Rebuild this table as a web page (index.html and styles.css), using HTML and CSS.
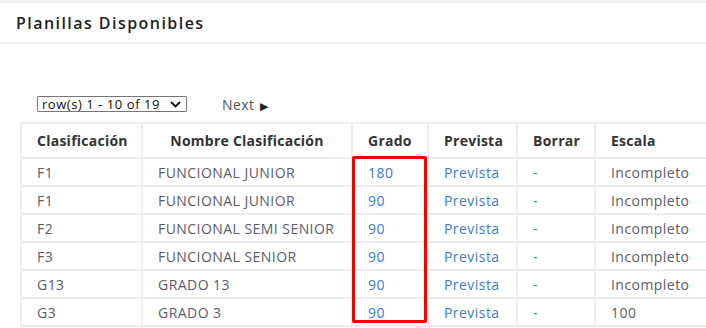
FILE: index.html
```html
<!DOCTYPE html>
<html lang="es">
<head>
<meta charset="utf-8">
<title>Planillas Disponibles</title>
<link rel="stylesheet" href="styles.css">
</head>
<body>
<div class="topbar"></div>
<header class="panel-head">
  <h1 class="panel-title">Planillas Disponibles</h1>
</header>
<main class="panel-body">
  <div class="pager">
    <div class="select">
      <span class="select-text">row(s) 1 - 10 of 19</span>
      <svg class="chev" width="11" height="7" viewBox="0 0 11 7"><path d="M1 1 L5.5 5.5 L10 1" fill="none" stroke="#111" stroke-width="1.8"/></svg>
    </div>
    <span class="next">Next <span class="tri">&#9654;</span></span>
  </div>
  <div class="table-wrap">
    <table class="grid">
      <colgroup>
        <col class="c1"><col class="c2"><col class="c3"><col class="c4"><col class="c5"><col class="c6">
      </colgroup>
      <thead>
        <tr>
          <th>Clasificación</th>
          <th class="center">Nombre Clasificación</th>
          <th>Grado</th>
          <th>Prevista</th>
          <th>Borrar</th>
          <th>Escala</th>
        </tr>
      </thead>
      <tbody>
        <tr><td>F1</td><td>FUNCIONAL JUNIOR</td><td class="link">180</td><td class="link">Prevista</td><td class="link">-</td><td>Incompleto</td></tr>
        <tr><td>F1</td><td>FUNCIONAL JUNIOR</td><td class="link">90</td><td class="link">Prevista</td><td class="link">-</td><td>Incompleto</td></tr>
        <tr><td>F2</td><td>FUNCIONAL SEMI SENIOR</td><td class="link">90</td><td class="link">Prevista</td><td class="link">-</td><td>Incompleto</td></tr>
        <tr><td>F3</td><td>FUNCIONAL SENIOR</td><td class="link">90</td><td class="link">Prevista</td><td class="link">-</td><td>Incompleto</td></tr>
        <tr><td>G13</td><td>GRADO 13</td><td class="link">90</td><td class="link">Prevista</td><td class="link">-</td><td>Incompleto</td></tr>
        <tr><td>G3</td><td>GRADO 3</td><td class="link">90</td><td class="link">Prevista</td><td class="link">-</td><td>100</td></tr>
        <tr><td>G4</td><td>GRADO 4</td><td class="link">90</td><td class="link">Prevista</td><td class="link">-</td><td>100</td></tr>
      </tbody>
    </table>
    <div class="highlight"></div>
  </div>
</main>
</body>
</html>
```

FILE: styles.css
```css
html, body {
  margin: 0;
  padding: 0;
  background: #fff;
  overflow: hidden;
  font-family: "Open Sans", "Noto Sans", sans-serif;
}
.topbar {
  height: 3px;
  background: #f0f0f0;
}
.panel-head {
  height: 39px;
  border-bottom: 2px solid #f0f0f0;
  padding-left: 16px;
  display: flex;
  align-items: center;
}
.panel-title {
  margin: 0;
  font-size: 16px;
  font-weight: 600;
  color: #222;
  letter-spacing: 1.45px;
}
.panel-body {
  padding-top: 52px;
}
.pager {
  display: flex;
  align-items: center;
  margin-left: 37px;
  gap: 35px;
  height: 16px;
}
.select {
  box-sizing: border-box;
  width: 150px;
  height: 16px;
  border: 1px solid #767676;
  border-radius: 1px;
  display: flex;
  align-items: center;
  justify-content: space-between;
  padding: 0 5px 0 4px;
  font-size: 13px;
  letter-spacing: 0.55px;
  color: #111;
}
.select-text { line-height: 14px; white-space: nowrap; }
.chev { margin-top: 1px; flex: none; }
.next {
  font-size: 14px;
  letter-spacing: 0.4px;
  color: #555;
}
.tri {
  font-size: 11px;
  color: #222;
  margin-left: 2px;
}
.table-wrap {
  position: relative;
  margin: 10px 0 0 20px;
  width: 760px;
}
.grid {
  border-collapse: collapse;
  table-layout: fixed;
  width: 760px;
  font-size: 14px;
}
.c1 { width: 121px; }
.c2 { width: 210px; }
.c3 { width: 76px; }
.c4 { width: 89px; }
.c5 { width: 78px; }
.grid th, .grid td {
  border: 2px solid #eeeeee;
  text-align: left;
  padding: 0 0 0 15px;
  white-space: nowrap;
}
.grid th {
  height: 33px;
  font-weight: 700;
  color: #333;
  letter-spacing: 0.25px;
}
.grid th.center { text-align: center; padding: 0; }
.grid td {
  height: 26px;
  color: #5c5c66;
  letter-spacing: 0.45px;
}
.grid td.link { color: #3d7cc9; }
.highlight {
  position: absolute;
  left: 332px;
  top: 34px;
  width: 75px;
  height: 167px;
  box-sizing: border-box;
  border: 3px solid #f40000;
  border-radius: 2px;
}
```
